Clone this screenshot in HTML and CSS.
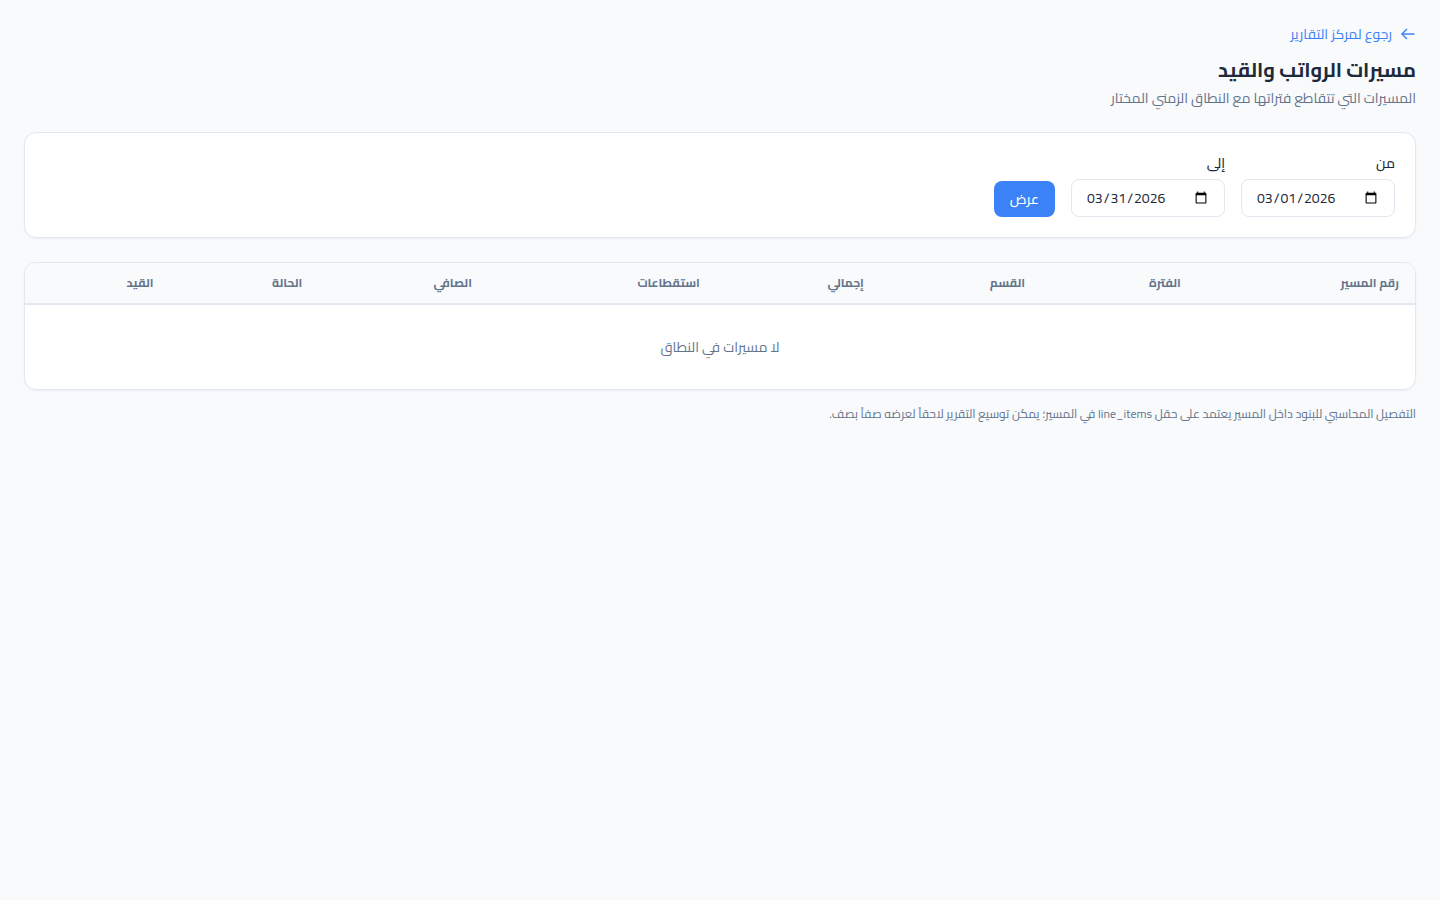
FILE: index.html
```html
<!DOCTYPE html>
<html lang="ar" dir="rtl">

<head>
  <meta charset="UTF-8">
  <meta name="viewport" content="width=device-width, initial-scale=1.0">
  <title>مسيرات الرواتب والقيد</title>
  <link rel="stylesheet" href="styles.css">
</head>

<body>
  <main class="page">
    <header class="page-header">
      <a class="back-link" href="#">
        <svg class="back-icon" viewBox="0 0 24 24" fill="none" stroke="currentColor" stroke-width="2" stroke-linecap="round" stroke-linejoin="round" aria-hidden="true">
          <path d="M21 12H3" />
          <path d="m10 19-7-7 7-7" />
        </svg>
        <span>رجوع لمركز التقارير</span>
      </a>
      <h1 class="page-title">مسيرات الرواتب والقيد</h1>
      <p class="page-subtitle">المسيرات التي تتقاطع فتراتها مع النطاق الزمني المختار</p>
    </header>

    <form class="card filter">
      <div class="field">
        <label class="field-label" for="from">من</label>
        <input class="field-input" id="from" type="date" value="2026-03-01" dir="ltr" lang="en-US">
      </div>
      <div class="field">
        <label class="field-label" for="to">إلى</label>
        <input class="field-input" id="to" type="date" value="2026-03-31" dir="ltr" lang="en-US">
      </div>
      <button class="btn" type="button">عرض</button>
    </form>

    <section class="card table-card">
      <table class="table">
        <colgroup>
          <col class="col-number">
          <col class="col-period">
          <col class="col-department">
          <col class="col-gross">
          <col class="col-deductions">
          <col class="col-net">
          <col class="col-status">
          <col class="col-entry">
        </colgroup>
        <thead>
          <tr>
            <th>رقم المسير</th>
            <th>الفترة</th>
            <th>القسم</th>
            <th>إجمالي</th>
            <th>استقطاعات</th>
            <th>الصافي</th>
            <th>الحالة</th>
            <th>القيد</th>
          </tr>
        </thead>
        <tbody>
          <tr>
            <td class="empty" colspan="8">لا مسيرات في النطاق</td>
          </tr>
        </tbody>
      </table>
    </section>

    <p class="note">التفصيل المحاسبي للبنود داخل المسير يعتمد على حقل line_items في المسير؛ يمكن توسيع التقرير لاحقاً لعرضه صفاً بصف.</p>
  </main>
</body>

</html>
```

FILE: styles.css
```css
* {
  box-sizing: border-box;
  margin: 0;
  padding: 0;
}

body {
  background-color: #f8fafc;
  color: #1e293b;
  font-family: Cairo, "Noto Sans", sans-serif;
  font-size: 14px;
  line-height: 20px;
}

.page {
  padding: 24px;
}

.page-header {
  margin-bottom: 24px;
}

.back-link {
  display: inline-flex;
  align-items: center;
  gap: 8px;
  margin-bottom: 8px;
  color: #3b82f6;
  text-decoration: none;
}

.back-icon {
  width: 16px;
  height: 16px;
}

.page-title {
  font-size: 20px;
  line-height: 36px;
  font-weight: 700;
}

.page-subtitle {
  color: #64748b;
}

.card {
  background-color: #fff;
  border: 1px solid #e2e8f0;
  border-radius: 12px;
  box-shadow: 0 1px 2px rgba(0, 0, 0, 0.05);
}

.filter {
  display: flex;
  flex-wrap: wrap;
  align-items: flex-end;
  gap: 16px;
  margin-bottom: 24px;
  padding: 20px;
}

.field {
  display: flex;
  flex-direction: column;
  gap: 6px;
}

.field-label {
  font-weight: 500;
}

.field-input {
  width: 154px;
  height: 38px;
  padding: 0 14px;
  border: 1px solid #e2e8f0;
  border-radius: 8px;
  background-color: #fff;
  color: #1e293b;
  font: inherit;
}

.btn {
  height: 36px;
  padding: 0 16px;
  border: none;
  border-radius: 8px;
  background-color: #3b82f6;
  color: #fff;
  font: inherit;
  font-weight: 500;
  cursor: pointer;
}

.table-card {
  margin-bottom: 14px;
  overflow: hidden;
}

.table {
  width: 100%;
  table-layout: fixed;
  border-collapse: collapse;
}

.table th {
  height: 41px;
  padding: 0 16px;
  border-bottom: 2px solid #e2e8f0;
  background-color: #f8fafc;
  color: #64748b;
  font-size: 12px;
  font-weight: 700;
  text-align: right;
}

.col-number {
  width: 15.7%;
}

.col-period {
  width: 11.2%;
}

.col-department {
  width: 11.6%;
}

.col-gross {
  width: 11.8%;
}

.col-deductions {
  width: 16.4%;
}

.col-net {
  width: 12.2%;
}

.col-status {
  width: 10.7%;
}

.col-entry {
  width: 10.4%;
}

.table .empty {
  padding: 32px 16px;
  color: #64748b;
  text-align: center;
}

.note {
  color: #64748b;
  font-size: 12px;
}
```
